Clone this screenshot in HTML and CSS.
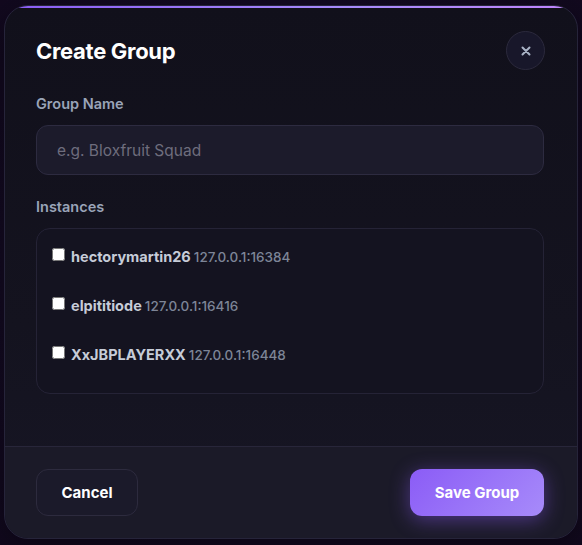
FILE: index.html
```html
<!DOCTYPE html>
<html>
<head>
<meta charset="utf-8">
<link rel="stylesheet" href="styles.css">
</head>
<body>
<div class="modal">
  <div class="accent"></div>
  <div class="header">
    <h2 class="title">Create Group</h2>
    <button class="close" aria-label="Close">
      <svg width="10" height="10" viewBox="0 0 10 10"><path d="M1.5 1.5L8.5 8.5M8.5 1.5L1.5 8.5" stroke="#a9b3c6" stroke-width="2" stroke-linecap="round"/></svg>
    </button>
  </div>
  <div class="body">
    <label class="label">Group Name</label>
    <input class="input" type="text" placeholder="e.g. Bloxfruit Squad">
    <div class="label label-gap">Instances</div>
    <div class="list">
      <label class="row"><input type="checkbox"><span class="name">hectorymartin26</span><span class="addr">127.0.0.1:16384</span></label>
      <label class="row"><input type="checkbox"><span class="name">elpititiode</span><span class="addr">127.0.0.1:16416</span></label>
      <label class="row"><input type="checkbox"><span class="name">XxJBPLAYERXX</span><span class="addr">127.0.0.1:16448</span></label>
    </div>
  </div>
  <div class="footer">
    <button class="btn btn-cancel">Cancel</button>
    <button class="btn btn-save">Save Group</button>
  </div>
</div>
</body>
</html>
```
FILE: styles.css
```css
html, body {
  margin: 0;
  height: 100%;
}
body {
  background: radial-gradient(ellipse at center, #1a1230 0%, #140b24 70%, #12091f 100%);
  padding: 5px 4px 0 4px;
  box-sizing: border-box;
  font-family: Inter, "Noto Sans", sans-serif;
}
.modal {
  width: 574px;
  box-sizing: border-box;
  border: 1px solid #26243a;
  border-radius: 24px;
  overflow: hidden;
  background: linear-gradient(180deg, #11101b 0%, #14131f 60%, #171625 100%);
  box-shadow: 0 10px 40px rgba(0,0,0,0.5);
}
.accent {
  height: 3px;
  background: linear-gradient(90deg, #8b5cf6 0%, #a78bfa 60%, #c084fc 100%);
  margin-top: -1px;
}
.header {
  display: flex;
  align-items: center;
  justify-content: space-between;
  padding: 23px 32px 0 31px;
}
.title {
  margin: 0;
  font-size: 22px;
  font-weight: 700;
  color: #ffffff;
  letter-spacing: -0.3px;
}
.close {
  width: 39px;
  height: 39px;
  border-radius: 50%;
  border: 1px solid #2c2a3d;
  background: #18172a;
  display: flex;
  align-items: center;
  justify-content: center;
  padding: 0;
}
.body {
  padding: 24px 33px 52px 31px;
  display: flex;
  flex-direction: column;
}
.label {
  font-size: 14.5px;
  font-weight: 600;
  color: #9aa4b8;
  line-height: 20px;
  margin-bottom: 11px;
}
.label-gap {
  margin-top: 22px;
}
.input {
  height: 50px;
  box-sizing: border-box;
  border: 1px solid #2d2b40;
  border-radius: 12px;
  background: #1c1b2b;
  padding: 0 20px;
  font-family: Inter, "Noto Sans", sans-serif;
  font-size: 15.5px;
  color: #e5e7eb;
  outline: none;
}
.input::placeholder {
  color: #6e6d7d;
}
.list {
  border: 1px solid #252336;
  border-radius: 14px;
  background: #141320;
  padding: 3px 16px 14px 15px;
  display: flex;
  flex-direction: column;
}
.row {
  height: 49px;
  display: flex;
  align-items: center;
}
.row input {
  width: 13px;
  height: 13px;
  margin: -4px 6px 0 0;
}
.name {
  font-size: 14.5px;
  font-weight: 700;
  color: #c6ccd8;
  margin-right: 3px;
}
.addr {
  font-size: 13.5px;
  font-weight: 500;
  color: #7d8597;
}
.footer {
  border-top: 1px solid #28263a;
  background: #1b1a28;
  display: flex;
  justify-content: space-between;
  align-items: center;
  padding: 22px 33px 22px 31px;
}
.btn {
  height: 47px;
  border-radius: 12px;
  font-family: Inter, "Noto Sans", sans-serif;
  font-size: 15px;
  font-weight: 700;
  color: #ffffff;
  cursor: pointer;
}
.btn-cancel {
  width: 102px;
  border: 1px solid #2d2b3e;
  background: #1b1a2a;
}
.btn-save {
  width: 134px;
  border: none;
  background: linear-gradient(135deg, #8b5cf6 0%, #a78bfa 100%);
  box-shadow: 0 4px 20px rgba(139, 92, 246, 0.45);
}
```
